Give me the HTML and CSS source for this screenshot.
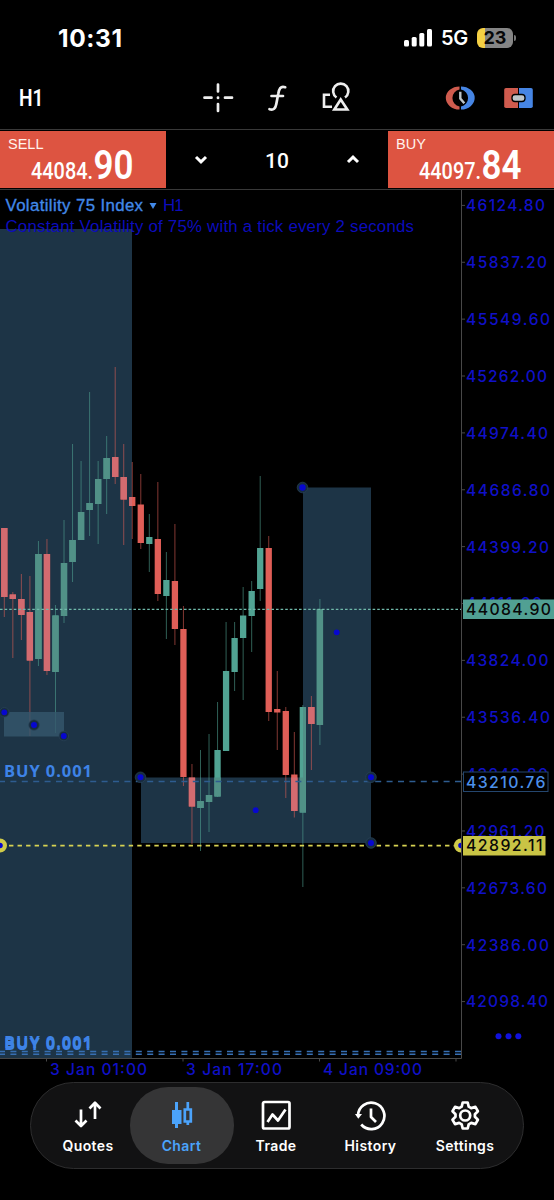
FILE: index.html
```html
<!DOCTYPE html>
<html lang="en">
<head>
<meta charset="utf-8">
<title>Volatility 75 Index</title>
<link rel="stylesheet" href="styles.css">
</head>
<body>
<div class="screen">
  <header class="status">
    <span class="clock">10:31</span>
    <span class="signals">
      <svg class="bars" width="29" height="18" viewBox="0 0 29 18"><rect x="0" y="11" width="5" height="6.500" rx="1.500"/><rect x="7.700" y="8" width="5" height="9.500" rx="1.500"/><rect x="15.300" y="4" width="5" height="13.500" rx="1.500"/><rect x="23" y="0" width="5" height="17.500" rx="1.500"/></svg>
      <span class="network">5G</span>
      <span class="battery"><span class="level">23</span><i class="nub"></i></span>
    </span>
  </header>

  <div class="toolbar">
    <svg width="554" height="55" viewBox="0 75 554 55">
      <text class="cond heavy" x="19" y="106" font-size="24" textLength="24.500" lengthAdjust="spacingAndGlyphs">H1</text>
      <g class="stroke">
        <path d="M218 84.500v7M218 104v7M204.500 97.700h7M225 97.700h7"/>
        <path d="M218 97.500v.4"/>
        <path d="M285.200 87.200C280.500 85.500 279 89 278.200 94L276.300 104C275.500 108.500 273.500 110.500 269.500 109.200M271.500 96H283"/>
        <path d="M336.500 97.500A7.600 7.600 0 1 1 345 97.500M330 94.700h-6v12h8M340.700 99.500L334.300 109.500H347.300Z" class="square"/>
      </g>
      <path class="red" d="M459.500 86.500A13.700 11.500 0 0 0 459.500 109.500V106.500A9 8.700 0 0 1 459.500 89.500Z"/>
      <path class="blue" d="M461 86.500A13.700 11.500 0 0 1 461 109.500V106.500A9 8.700 0 0 0 461 89.500Z"/>
      <path class="hands" d="M460.300 91.800V98.500L464.300 103.300"/>
      <path class="red" d="M506 88h12v20h-12q-1.800 0-1.800-1.800V89.800Q504.200 88 506 88Z"/>
      <path class="blue" d="M519 88h12q1.800 0 1.800 1.800v16.400q0 1.800-1.800 1.800h-12Z"/>
      <rect class="pill" x="512" y="94.500" width="13" height="7" rx="3"/>
    </svg>
  </div>

  <section class="trade">
    <div class="side">
      <span class="label">SELL</span>
      <svg class="price" width="166" height="40" viewBox="0 147 166 40">
        <text class="cond medium" x="31" y="179" font-size="24" textLength="62" lengthAdjust="spacingAndGlyphs">44084.</text>
        <text class="cond heavy" x="93.500" y="179" font-size="40.500" textLength="40" lengthAdjust="spacingAndGlyphs">90</text>
      </svg>
    </div>
    <div class="volume">
      <svg width="14" height="9" viewBox="0 0 14 9"><path d="M2 2L7 6.800L12 2"/></svg>
      <span>10</span>
      <svg width="14" height="9" viewBox="0 0 14 9"><path d="M2 7L7 2.200L12 7"/></svg>
    </div>
    <div class="side">
      <span class="label">BUY</span>
      <svg class="price" width="166" height="40" viewBox="388 147 166 40">
        <text class="cond medium" x="419" y="179" font-size="24" textLength="62" lengthAdjust="spacingAndGlyphs">44097.</text>
        <text class="cond heavy" x="481.500" y="179" font-size="40.500" textLength="40" lengthAdjust="spacingAndGlyphs">84</text>
      </svg>
    </div>
  </section>

  <main class="chart">
    <svg width="554" height="892" viewBox="0 190 554 892">
      <defs>
        <clipPath id="zones"><rect x="0" y="229" width="132" height="829"/><rect x="303" y="487.500" width="68" height="355"/><rect x="141" y="777.500" width="230" height="65"/></clipPath>
      </defs>
      <g class="zone">
        <rect x="0" y="229" width="132" height="829"/>
        <path d="M303 487.500H371V843H141V777.500H303Z"/>
      </g>
      <g id="candles"></g>
      <g id="candles-in-zone" class="muted" clip-path="url(#zones)"></g>
      <rect class="small-zone" x="4" y="712" width="60" height="24.500"/>

      <path class="bid" d="M0 609.400H461"/>
      <path class="position" d="M-1 781.500H461"/>
      <path class="stop-line" d="M9 845.600H461"/>
      <path class="order" d="M-1 1051.500H461M-1 1054.300H461"/>

      <path class="axis" d="M461.500 190V1058.500H0M46.500 1058V1061.500M183 1058V1061.500M319.500 1058V1061.500M456 1058V1061.500"/>
      <g id="price-axis" class="scale"></g>
      <g class="scale">
        <text x="50" y="1075" textLength="97">3 Jan 01:00</text>
        <text x="186" y="1075" textLength="96">3 Jan 17:00</text>
        <text x="323" y="1075" textLength="99">4 Jan 09:00</text>
      </g>

      <text class="symbol" x="5.500" y="211" textLength="137.500">Volatility 75 Index</text>
      <path class="caret" d="M149.500 203h7l-3.500 6z"/>
      <text class="info" x="163" y="211" textLength="20.500">H1</text>
      <text class="info" x="5.500" y="231.500" textLength="408.500">Constant Volatility of 75% with a tick every 2 seconds</text>
      <text class="deal" x="4" y="777.300" textLength="88">BUY 0.001</text>
      <text class="deal" x="4" y="1048" textLength="88">BUY 0.001</text>
      <text class="deal" x="4" y="1049.500" textLength="88">BUY 0.001</text>

      <g class="halo"><circle cx="302.500" cy="487.500" r="5.300"/><circle cx="140.500" cy="777.300" r="5.300"/><circle cx="371" cy="777.300" r="5.300"/><circle cx="371" cy="843" r="5.300"/><circle cx="4.300" cy="712.300" r="4.800"/><circle cx="34" cy="725" r="5.300"/><circle cx="63.800" cy="736" r="4.800"/></g>
      <path class="ring" d="M0 838.500A7 7 0 0 1 0 852.500ZM461 838.500A7 7 0 0 0 461 852.500Z"/>
      <g class="dot"><circle cx="302.500" cy="487.500" r="3.200"/><circle cx="140.500" cy="777.300" r="3"/><circle cx="371" cy="777.300" r="3"/><circle cx="371" cy="843" r="3"/><circle cx="4.300" cy="712.300" r="2.900"/><circle cx="34" cy="725" r="3"/><circle cx="63.800" cy="736" r="2.900"/><circle cx="336.700" cy="632.300" r="2.900"/><circle cx="255.700" cy="810.200" r="2.900"/><path d="M0 842.700A2.800 2.800 0 0 1 0 848.300ZM461 842.700A2.800 2.800 0 0 0 461 848.300Z"/></g>

      <rect class="tag-bid" x="463" y="599.500" width="91" height="19.500"/>
      <text class="tag" x="466" y="614.900" textLength="85">44084.90</text>
      <rect class="tag-position" x="463.500" y="772" width="84.500" height="19.500"/>
      <text class="tag open" x="466" y="787.700" textLength="79.500">43210.76</text>
      <rect class="tag-stop" x="463" y="836" width="82.500" height="19.500"/>
      <text class="tag" x="466" y="851.300" textLength="76.500">42892.11</text>
      <g class="more"><circle cx="498.500" cy="1036.300" r="3"/><circle cx="508.500" cy="1036.300" r="3"/><circle cx="518.300" cy="1036.300" r="3"/></g>
    </svg>
  </main>

  <nav class="tabs">
    <div class="tab"><svg width="32" height="32" viewBox="0 0 32 32"><path d="M9 9.500V26M3.500 20.500L9 26L14.500 20.500M23 19V2.500M17.500 8.500L23 2.800L28.500 8.500"/></svg><span>Quotes</span></div>
    <div class="tab active"><svg width="32" height="32" viewBox="0 0 32 32"><path class="solid" d="M9 2h3v8h3.500v14H12v4H9v-4H6V10h3z"/><path class="hollow" d="M21.800 2v7M21.800 22v3M18.800 9.500h6v12h-6z"/></svg><span>Chart</span></div>
    <div class="tab"><svg width="32" height="32" viewBox="0 0 32 32"><rect x="3" y="2" width="26.500" height="26.500" rx="1.500"/><path d="M7.500 22L12.500 14.500L18 20.500L25.500 9.500"/></svg><span>Trade</span></div>
    <div class="tab"><svg width="32" height="32" viewBox="1.500 0 32 32"><path d="M4.500 15.500A13.200 13.200 0 1 1 7.700 24.500M17.500 8.500V17L22.500 22"/><path class="arrow" d="M1.500 14h7l-3.700 4.800z"/></svg><span>History</span></div>
    <div class="tab"><svg width="32" height="32" viewBox="0 0 32 32"><path d="M13.700 2.500h5l1 4.100 2.500 1.500 4.200-1.200 2.500 4.300-3 3v2.600l3 3-2.500 4.300-4.200-1.200-2.500 1.500-1 4.100h-5l-1-4.100-2.500-1.500L6 24.100l-2.500-4.300 3-3v-2.600l-3-3L6 6.900l4.200 1.200 2.500-1.500z"/><circle cx="16.200" cy="15.500" r="5"/></svg><span>Settings</span></div>
  </nav>
</div>
<script src="chart.js"></script>
</body>
</html>
```
FILE: styles.css
```css
* { box-sizing: border-box; }
body { margin: 0; background: #000; color: #fff; font-family: Inter, "Liberation Sans", sans-serif; }
svg { display: block; flex: none; }
.screen { width: 554px; height: 1200px; overflow: hidden; display: flex; flex-direction: column; background: #000; }

.status { height: 75px; display: flex; justify-content: space-between; align-items: center; padding: 0 38px 0 58px; }
.clock { font-size: 24.5px; font-weight: 700; letter-spacing: .6px; }
.signals { display: flex; align-items: center; }
.bars { fill: #fff; }
.network { font-size: 20px; font-weight: 600; margin-left: 8px; width: 27px; letter-spacing: -.4px; }
.battery { display: flex; align-items: center; margin-left: 9px; }
.level { width: 36px; height: 20px; border-radius: 6px; background: linear-gradient(90deg, #f5d044 0 8px, #858585 8px); color: #080808; font-size: 18px; line-height: 20px; font-weight: 700; text-align: center; }
.nub { width: 2px; height: 6px; margin-left: 1px; border-radius: 0 3px 3px 0; background: #777; }

.toolbar { height: 54px; }
.cond { font-family: Roboto, sans-serif; fill: #fff; }
.medium { font-weight: 500; }
.heavy { font-weight: 600; }
.stroke { fill: none; stroke: #eee; stroke-width: 2.7; stroke-linecap: round; }
.square { stroke-linecap: butt; stroke-width: 2.6; }
.red { fill: #cf5b4e; }
.blue { fill: #4685e4; }
.hands { fill: none; stroke: #bdc4c9; stroke-width: 2.4; }
.pill { fill: #bdc4c9; stroke: #000; stroke-width: 1.3; }

.trade { height: 61px; display: flex; border-top: 1px solid #393939; border-bottom: 1px solid #393939; padding: 1px 0; }
.side { width: 166px; background: #dd5441; padding-top: 5px; display: flex; flex-direction: column; }
.label { font: 14.5px/16px "Liberation Sans", sans-serif; color: #fff2ec; padding-left: 8px; height: 11px; }
.price { overflow: visible; }
.volume { width: 222px; padding: 2px 28px 0; display: flex; align-items: center; justify-content: space-between; font: 500 21px Roboto, sans-serif; }
.volume svg { fill: none; stroke: #fff; stroke-width: 3; margin-bottom: 3px; }

.chart { height: 892px; }
.zone { fill: #1d3446; }
.small-zone { fill: #36586d; opacity: .8; }
.up { fill: #51a393; }
.down { fill: #e05e57; }
.muted .up { fill: #519187; }
.muted .down { fill: #d36b70; }
.wick { opacity: .58; }
.muted .wick { opacity: 0; }
.bid { stroke: #70b9aa; stroke-width: 1.4; stroke-dasharray: 2.6 2; }
.position { stroke: #2e5c90; stroke-width: 1.5; stroke-dasharray: 6 5.4; }
.order { stroke: #376fb3; stroke-width: 1.4; stroke-dasharray: 6 5.4; }
.stop-line { stroke: #d7d252; stroke-width: 1.8; stroke-dasharray: 4.4 4.15; }
.axis, .tick { fill: none; stroke: #484848; stroke-width: 1; }
.scale { font: 500 15.5px Inter, sans-serif; fill: #1010c8; }
.symbol { font: 500 16.8px "Liberation Sans", sans-serif; fill: #4289e8; stroke: #4289e8; stroke-width: .35; }
.info { font: 16.8px "Liberation Sans", sans-serif; fill: #0c0cbc; }
.caret { fill: #4289e8; }
.deal { font: 700 16.5px "Open Sans", sans-serif; fill: #3e83e6; }
.halo { fill: #172c40; stroke: #294357; stroke-width: .7; }
.dot { fill: #0707cf; }
.ring { fill: #cfca49; }
.tag { font: 500 15.8px Inter, sans-serif; fill: #080808; }
.open { fill: #4c90ea; }
.tag-bid { fill: #51a093; }
.tag-position { fill: #000; stroke: #24466e; }
.tag-stop { fill: #c9c445; }
.more { fill: #1111dc; }

.tabs { height: 87px; width: 494px; margin: 0 30px; flex: none; display: flex; justify-content: space-between; padding: 4px 6px 4px 4px; border: 1px solid #2d2d2e; border-radius: 44px; background: #121213; }
.tab { width: 104px; margin-right: -10px; height: 77px; border-radius: 38px; display: flex; flex-direction: column; align-items: center; padding-top: 13px; font-size: 14px; font-weight: 600; line-height: 18px; letter-spacing: .4px; }
.tab:first-child { padding-left: 2px; }
.tab:last-child { margin-right: 0; }
.tab svg { fill: none; stroke: #fff; stroke-width: 2.7; stroke-linejoin: round; margin-bottom: 5px; }
.active { background: #353536; color: #4ba3fb; }
.tab .solid { fill: #4ba3fb; stroke: none; }
.tab .hollow { stroke: #4ba3fb; stroke-linejoin: miter; }
.tab .arrow { fill: #fff; stroke: none; }
```
FILE: chart.js
```js
// Each candle: direction, body top, body bottom, wick top, wick bottom.
const candles = [
  ["down", 528, 597, 528, 617], ["down", 594.5, 599, 592, 658], ["down", 599, 615, 574, 640],
  ["down", 612, 660.5, 576, 736], ["up", 554, 659, 541, 666], ["down", 554, 671, 539, 675],
  ["up", 615.5, 672, 605, 733], ["up", 563, 616, 520, 623], ["up", 540, 562, 444, 582],
  ["up", 512, 540, 461, 540], ["up", 503, 510, 392, 536], ["up", 479, 504, 461, 544],
  ["up", 458, 479, 436, 514], ["down", 457, 477, 367, 484], ["down", 477, 499.5, 444, 545],
  ["down", 497, 506, 462, 539], ["down", 504.5, 543, 474, 549], ["up", 537, 544, 514, 572],
  ["down", 539, 594, 482, 601], ["up", 580, 596, 552, 639], ["down", 581, 629, 524, 645],
  ["down", 629, 777, 606, 786], ["down", 777.5, 806.5, 764, 844], ["up", 801, 808, 750, 851],
  ["up", 795, 802, 734, 832], ["up", 750, 796.5, 702, 797], ["up", 671, 751, 622, 751],
  ["up", 638, 672, 622, 691], ["up", 615.5, 638, 587, 700], ["up", 591, 616, 581, 652],
  ["up", 548, 589, 476, 601], ["down", 548, 712, 536, 721], ["down", 709, 712.5, 671, 750],
  ["down", 711, 775, 707, 798], ["down", 774.5, 811, 732, 817.5], ["up", 707, 812.5, 705, 887],
  ["down", 707, 724, 696, 770], ["up", 609, 725, 599, 745]
];
const markup = candles.map(([dir, top, bottom, high, low], i) => {
  const x = 4.3 + i * 8.53;
  return `<rect class="${dir} wick" x="${x - 0.5}" y="${high}" width="1" height="${low - high}"/>` +
    `<rect class="${dir}" x="${x - 3.15}" y="${top}" width="6.3" height="${bottom - top}"/>`;
}).join("");
document.getElementById("candles").innerHTML = markup;
document.getElementById("candles-in-zone").innerHTML = markup;

// Price labels with their drawn widths.
const prices = [["46124.80", 79], ["45837.20", 81], ["45549.60", 84], ["45262.00", 81], ["44974.40", 82],
  ["44686.80", 84], ["44399.20", 83], ["44111.60", 76], ["43824.00", 82.5], ["43536.40", 84],
  ["43248.80", 82], ["42961.20", 78.5], ["42673.60", 81], ["42386.00", 83], ["42098.40", 82]];
document.getElementById("price-axis").innerHTML = prices.map(([label, width], i) => {
  const y = 205.4 + i * 56.87;
  return `<path class="tick" d="M462 ${y}h3"/><text x="466" y="${y + 5.9}" textLength="${width}">${label}</text>`;
}).join("");
```
